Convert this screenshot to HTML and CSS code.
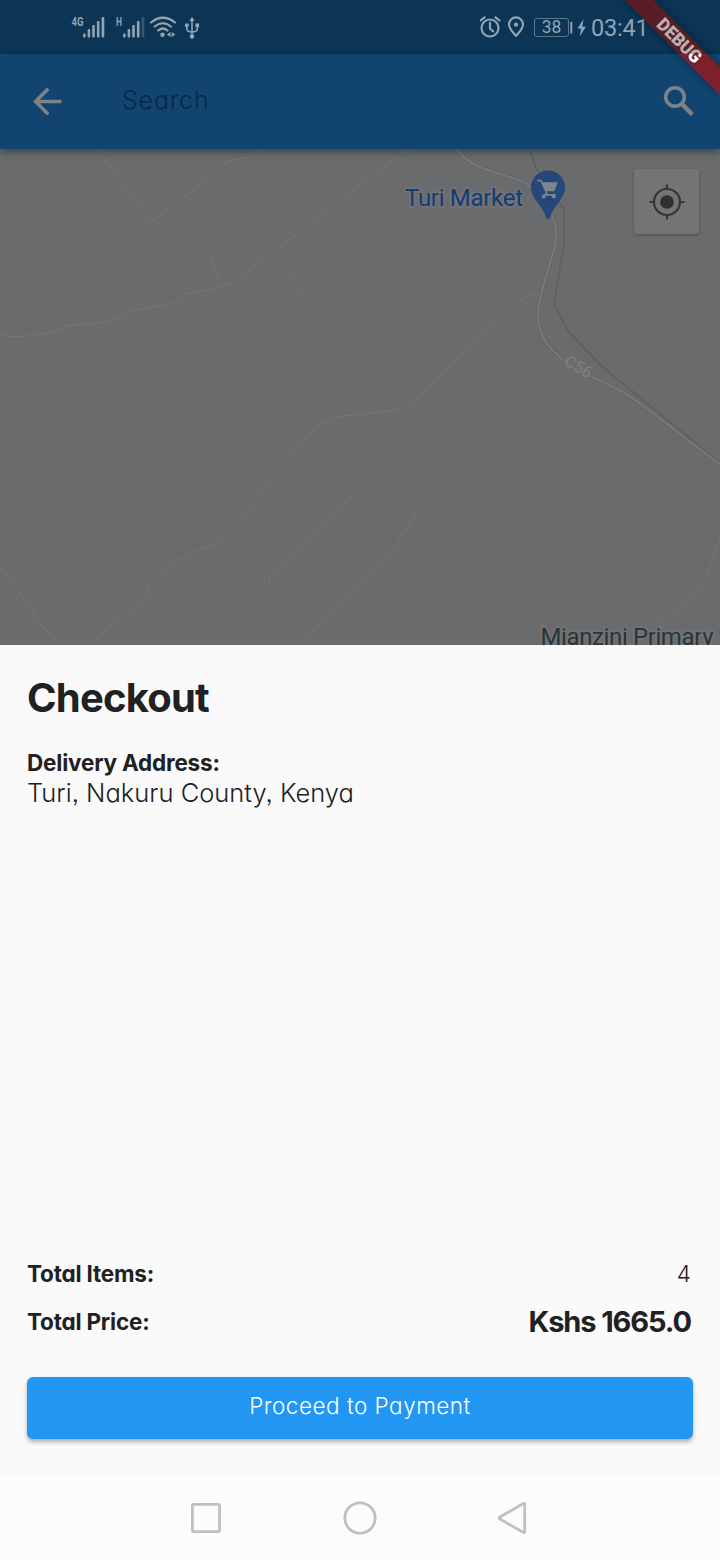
FILE: index.html
```html
<!DOCTYPE html>
<html lang="en">
<head>
<meta charset="utf-8">
<title>Checkout</title>
<link rel="stylesheet" href="styles.css">
</head>
<body>
<div class="screen">
  <header class="status-bar">
    <svg class="status-left" width="130" height="30" viewBox="70 12 130 30">
      <g class="status-fill">
        <text class="net-label" x="71.5" y="26" textLength="12" lengthAdjust="spacingAndGlyphs">4G</text>
        <text class="net-label" x="116" y="26" textLength="6" lengthAdjust="spacingAndGlyphs">H</text>
        <rect x="83" y="33.500" width="2.600" height="4" rx="1"/>
        <rect x="87.600" y="29" width="2.600" height="8.500" rx="1"/>
        <rect x="92.200" y="25" width="2.600" height="12.500" rx="1"/>
        <rect x="96.900" y="21" width="2.600" height="16.500" rx="1"/>
        <rect x="101.600" y="17" width="2.700" height="20.500" rx="1"/>
        <rect x="123" y="33.500" width="2.600" height="4" rx="1"/>
        <rect x="127.600" y="29" width="2.600" height="8.500" rx="1"/>
        <rect x="132.200" y="25" width="2.600" height="12.500" rx="1"/>
        <rect x="136.900" y="21" width="2.600" height="16.500" rx="1"/>
        <rect x="141.600" y="17" width="2.700" height="20.500" rx="1" opacity=".3"/>
        <circle cx="162.500" cy="34.800" r="2.200"/>
        <path d="M170.500 32v5l-3.700-2.500zM171.700 32v5l3.700-2.500z"/>
        <circle cx="192" cy="36.500" r="2.300"/>
        <path d="M192 16.800l2.700 4.200h-5.400z"/>
        <circle cx="186.800" cy="25.300" r="2"/>
        <rect x="195.400" y="23.400" width="3.700" height="3.700"/>
      </g>
      <g class="status-line">
        <path d="M151 22.500q12-9.500 24 0M154.700 26.500q8.300-6.700 16.200 0M158.200 30.500q4.800-4 9.300 0"/>
        <path stroke-width="1.600" d="M192 20v16M186.800 26v2.500q0 3.500 5.200 3.500q5.300 0 5.300-3.500V26"/>
      </g>
    </svg>
    <div class="status-right">
      <svg width="44" height="24" viewBox="480 15 44 24">
        <g class="status-line">
          <circle cx="490" cy="28" r="8.500"/>
          <path d="M490 22.500v6l3.200 2.800M480.500 20.500l4-3.200M499.500 20.500l-4-3.200"/>
          <path d="M516 36c-3-3.500-7-7.400-7-11.600a7 7 0 0 1 14 0c0 4.200-4 8.100-7 11.600z"/>
        </g>
        <circle class="status-fill" cx="516" cy="24.700" r="2.100"/>
      </svg>
      <span class="battery">38</span>
      <svg class="bolt" width="18" height="20" viewBox="570 18 18 20">
        <path class="status-fill" d="M570.300 22h2v11.500h-2zM583.500 19l-6 9.500h3.500l-1.200 8 6-9.800h-3.500z"/>
      </svg>
      <span class="clock">03:41</span>
    </div>
  </header>
  <nav class="app-bar">
    <svg width="30" height="30" viewBox="33 86 30 30"><path class="bar-icon" d="M61.500 101.500H36M48.300 88.800L35.600 101.500l12.700 12.700"/></svg>
    <span class="search-label">Search</span>
    <svg width="32" height="32" viewBox="663 85 32 32"><circle class="bar-icon" cx="675" cy="97" r="9.300"/><path class="bar-icon glass-handle" d="M682 104l10.200 10.500"/></svg>
  </nav>
  <main class="map">
    <svg class="map-canvas" width="720" height="496" viewBox="0 0 720 496">
      <g transform="translate(0 -4.500) scale(.33333)">
        <g class="lane">
          <path class="lane-strong" d="M290 10L453 232L515 188L640 90Q680 50 700 46L750 38L790 10"/>
          <path class="lane-strong" d="M1080 123L710 405Q680 430 552 448Q545 475 490 484Q400 492 380 508Q350 530 290 536L200 543Q170 565 110 570Q40 585 0 570"/>
          <path class="lane-strong" d="M1080 810Q990 812 950 850Q880 920 790 1030Q730 1130 700 1160Q670 1190 620 1208Q500 1255 455 1305Q430 1370 400 1395L300 1470L285 1500"/>
          <path class="lane-strong" d="M1080 1025L808 1297V1315L625 1500M1080 1313L950 1445L910 1500M988 829L1080 927M1050 1055L1080 1090M0 1265L38 1315L103 1410Q110 1440 176 1487V1500M0 1453L48 1500M865 390L922 468M630 340L662 415"/>
          <path d="M453 232L240 398L95 512L15 570M0 292L320 50M0 80L105 215L180 310M815 123L480 385L540 460M750 38L910 253L860 298L947 378L990 346L895 273M942 228L990 278M960 210L1057 295L990 346L1010 370M947 378L750 412M620 140L690 217M510 187L555 245M362 410V330L395 275M610 440L650 485M455 878L705 680L785 783L542 987L455 878L400 905L380 850M650 605L705 680M630 655L665 700M400 905L385 925M400 905L345 880L290 815M330 805L390 770M270 885L20 1080L155 1195M575 1062L650 995M580 950L590 990M620 1208L905 1500M480 1285L650 1470M455 1305L440 1400L365 1500M840 1265L880 1305M775 1265L808 1297M913 1190L940 1235M1015 1380L1080 1440M150 535V565M288 535V550M330 528V550M355 520V557M140 622H300M38 1315Q20 1370 0 1385M103 1410L118 1365M150 145L168 167M175 125L192 150M930 800L945 820M985 803L1000 787M885 130L905 147L935 132M905 147L897 160M645 30L670 60M413 395L435 435"/>
        </g>
      </g>
      <g transform="translate(360 -4.500) scale(.33333)">
        <g class="lane">
          <path class="lane-strong" d="M0 122L115 33L165 12M540 453Q520 440 495 460Q440 495 220 717Q150 790 120 795L0 810M0 927L173 1100L105 1207L0 1312M1080 1180Q1030 1370 930 1410L860 1450"/>
          <path d="M130 612L380 430M130 612L120 550M190 765L270 848L105 1032M270 848L435 1015L290 1165M530 910L435 1015M455 728L378 812M540 700L503 770L547 812L620 750M625 810L685 870M645 787L710 850M640 919H678M975 890L915 990M815 1160L765 1240L740 1305M400 1200L330 1273L490 1425L690 1215M330 1273L200 1420L130 1490M75 1385L0 1450M375 1225L420 1270M395 1205L450 1257M480 1175L495 1195M800 555L1020 718M765 340L805 315L870 360L960 440L1020 480M870 360L920 300L1000 240M1020 215L1080 265M305 260L370 355L355 395L400 440M410 310L475 385L435 430M450 410L495 460M430 350L385 375M500 380L490 415L520 400M45 255L105 350M70 230L125 320M0 240L75 180M30 60L65 110M640 130L680 90L750 45M690 100L655 60M880 20L930 45M20 865L75 925M0 1025L45 982M1000 1420L1065 1370M150 1425L200 1480M250 1330L280 1360"/>
        </g>
        <path class="rail" d="M510 12L527 70L613 195V290L582 480L628 565L725 665L1080 955"/>
        <path class="road-edge" d="M287 12C350 95 470 85 515 130C590 200 605 260 570 355C535 470 520 520 548 575C595 670 720 700 805 752C870 795 980 885 1080 960"/>
        <path class="road" d="M287 12C350 95 470 85 515 130C590 200 605 260 570 355C535 470 520 520 548 575C595 670 720 700 805 752C870 795 980 885 1080 960"/>
      </g>
      <text class="road-name" x="0" y="0" transform="translate(563 215.500) rotate(30)" textLength="29">C56</text>
      <text class="place place-market" x="405" y="56.500" textLength="118">Turi Market</text>
      <text class="place place-school" x="540.500" y="496" textLength="173">Mianzini Primary</text>
      <path class="pin" d="M548 22a16.500 16.500 0 0 1 16.500 16.500c0 9-8 15.500-13 24.500l-2 5.500q-1.500 2.500-3 0l-2-5.500C539.500 54 531.500 47.500 531.500 38.500a16.500 16.500 0 0 1 16.500-16.500z"/>
      <g transform="translate(360 -4.500) scale(.33333)">
        <path class="cart-line" d="M531 108H543L560 145L555 151H588"/>
        <path class="cart" d="M546 113H593L583 140H558zM545 156a6 6 0 1 0 12 0a6 6 0 1 0-12 0M575 156a6 6 0 1 0 12 0a6 6 0 1 0-12 0"/>
      </g>
    </svg>
    <div class="locate">
      <svg width="36" height="36" viewBox="-18 -18 36 36"><circle class="target" r="13"/><path class="target" d="M0-17.500v5M0 17.500v-5M-17.500 0h5M17.500 0h-5"/><circle class="target-dot" r="6.800"/></svg>
    </div>
  </main>
  <section class="sheet">
    <h1 class="title">Checkout</h1>
    <div class="address-label">Delivery Address:</div>
    <div class="address">Turi, Nakuru County, Kenya</div>
    <div class="totals">
      <div class="row"><span class="row-label items-label">Total Items:</span><span class="count">4</span></div>
      <div class="row"><span class="row-label price-label">Total Price:</span><span class="price">Kshs 1665.0</span></div>
    </div>
    <button class="pay"><span class="pay-text">Proceed to Payment</span></button>
  </section>
  <footer class="nav-bar">
    <svg width="338" height="36" viewBox="190 1500 338 36">
      <rect class="nav-icon" x="192.400" y="1504.400" width="27.200" height="27.200" rx="1"/>
      <circle class="nav-icon" cx="360" cy="1518" r="15.200"/>
      <path class="nav-icon" d="M523.500 1503.500Q524.700 1502.800 524.700 1504.500V1531.500Q524.700 1533.200 523.500 1532.500L499.500 1518.800Q498.500 1518 499.500 1517.200z"/>
    </svg>
  </footer>
  <svg class="debug" width="100" height="100" viewBox="620 0 100 100">
    <defs>
      <filter id="soft" x="-30%" y="-30%" width="160%" height="160%"><feGaussianBlur stdDeviation="4"/></filter>
      <clipPath id="over"><rect x="620" y="0" width="100" height="54"/></clipPath>
      <clipPath id="under"><rect x="620" y="54" width="100" height="46"/></clipPath>
    </defs>
    <path class="debug-shadow" filter="url(#soft)" d="M625 0h28l67 67v28z"/>
    <path class="debug-band" d="M625 0h28L720 67V95z"/>
    <path class="debug-band-dim" clip-path="url(#over)" d="M625 0h28L720 67V95z"/>
    <g clip-path="url(#over)"><text class="debug-text debug-text-dim" transform="translate(679.500 40.500) rotate(45)" y="6.300" textLength="55" lengthAdjust="spacingAndGlyphs">DEBUG</text></g>
    <g class="debug-lit" clip-path="url(#under)"><text class="debug-text" aria-hidden="true" transform="translate(679.500 40.500) rotate(45)" y="6.300" textLength="55" lengthAdjust="spacingAndGlyphs">DEBUG</text></g>
  </svg>
</div>
</body>
</html>
```

FILE: styles.css
```css
* { box-sizing: border-box; }
body { margin: 0; background: #fafafa; }
.screen {
  position: relative;
  display: flex;
  flex-direction: column;
  width: 720px;
  height: 1560px;
  overflow: hidden;
  font-family: Inter, "Noto Sans", sans-serif;
  font-feature-settings: "cv11", "ss03";
  color: #212121;
}
svg { display: block; flex: none; }

.status-bar {
  display: flex;
  justify-content: space-between;
  height: 54px;
  padding: 12px 71px 0 70px;
  background: #0c3454;
}
.status-fill { fill: #91a4b3; }
.status-line { fill: none; stroke: #91a4b3; stroke-width: 2.2; stroke-linecap: round; stroke-linejoin: round; }
.net-label { font: 700 12px Roboto, sans-serif; }
.status-right { display: flex; align-items: flex-start; padding-top: 3px; }
.battery {
  width: 35px;
  height: 19px;
  margin: 3px 1px 0 10px;
  border: 1.5px solid #5d788d;
  border-radius: 3px;
  font: 17.500px/17px Roboto, sans-serif;
  text-align: center;
  color: #91a4b3;
}
.bolt { margin-top: 3px; }
.clock { width: 58px; margin-left: 3px; font: 23.500px/27px Roboto, sans-serif; letter-spacing: -.2px; color: #91a4b3; white-space: nowrap; }

.app-bar {
  position: relative;
  z-index: 1;
  display: flex;
  align-items: center;
  height: 95px;
  padding: 0 25px 1px 33px;
  background: #114470;
  box-shadow: 0 3px 7px rgba(0, 0, 0, .38);
}
.bar-icon { fill: none; stroke: #7d8287; stroke-width: 3.6; }
.glass-handle { stroke-width: 4.400; }
.search-label { flex: 1; padding: 0 0 3px 59px; font-size: 25px; font-weight: 300; letter-spacing: .8px; color: #082843; }

.map { position: relative; height: 496px; background: #6a6b6c; }
.lane { fill: none; stroke: #6e6f6f; stroke-width: 2.500; }
.lane-strong { stroke: #747574; stroke-width: 3; }
.rail { fill: none; stroke: #5f6062; stroke-width: 5; }
.road-edge { fill: none; stroke: #616263; stroke-width: 11; }
.road { fill: none; stroke: #777876; stroke-width: 7; }
.road-name { font: 500 17px Roboto, sans-serif; fill: #7c7d7d; stroke: #696a6b; stroke-width: 2; paint-order: stroke; }
.place { font-family: Roboto, sans-serif; font-size: 24px; stroke: #717273; stroke-width: 4; stroke-linejoin: round; paint-order: stroke; }
.place-market { fill: #123c76; }
.place-school { fill: #29353a; }
.pin { fill: #264779; stroke: #24427a; }
.cart { fill: #7b8694; }
.cart-line { fill: none; stroke: #7b8694; stroke-width: 5; }
.locate {
  position: absolute;
  top: 20px;
  right: 21px;
  display: grid;
  place-items: center;
  width: 65px;
  height: 65px;
  border-radius: 3px;
  background: #747474;
  box-shadow: 0 1px 3px rgba(0, 0, 0, .28);
}
.target { fill: none; stroke: #353535; stroke-width: 2.200; }
.target-dot { fill: #303030; }

.sheet { display: flex; flex-direction: column; height: 831px; padding: 26px 27px 37.500px; background: #fafafa; }
.title { margin: 0 0 23px; font-size: 40px; line-height: 54px; font-weight: 700; letter-spacing: -.8px; }
.address-label { font-size: 22.500px; line-height: 30px; font-weight: 700; letter-spacing: -.2px; }
.address { font-size: 25.500px; line-height: 29px; font-weight: 300; }
.totals { display: flex; flex-direction: column; margin-top: auto; }
.row { display: flex; justify-content: space-between; align-items: center; height: 47.500px; padding-right: 2px; }
.row-label { font-size: 22.500px; font-weight: 700; letter-spacing: -.2px; }
.count { font-size: 22.500px; font-weight: 300; }
.price { font-size: 29px; font-weight: 700; letter-spacing: -1.1px; }
.pay {
  display: flex;
  justify-content: center;
  align-items: center;
  height: 61.500px;
  margin-top: 32px;
  padding: 0 0 4px;
  border: 0;
  border-radius: 6px;
  background: #2196f3;
  box-shadow: 0 3px 4px rgba(0, 0, 0, .3);
  font: inherit;
  font-feature-settings: inherit;
  color: #fff;
}
.pay-text { font-size: 22.500px; font-weight: 300; letter-spacing: .5px; }

.nav-bar { display: flex; justify-content: center; height: 84px; padding-top: 24px; padding-right: 2px; background: #fcfcfc; }
.nav-icon { fill: none; stroke: #c0c0c0; stroke-width: 2.800; }

.debug { position: absolute; top: 0; right: 0; z-index: 2; }
.debug-shadow { fill: rgba(0, 0, 0, .4); }
.debug-band { fill: #7c212b; }
.debug-band-dim { fill: #5a1d26; }
.debug-text { font: 900 18px Roboto, sans-serif; text-anchor: middle; fill: #fff; }
.debug-text-dim { fill: #b9b0b2; }
```
